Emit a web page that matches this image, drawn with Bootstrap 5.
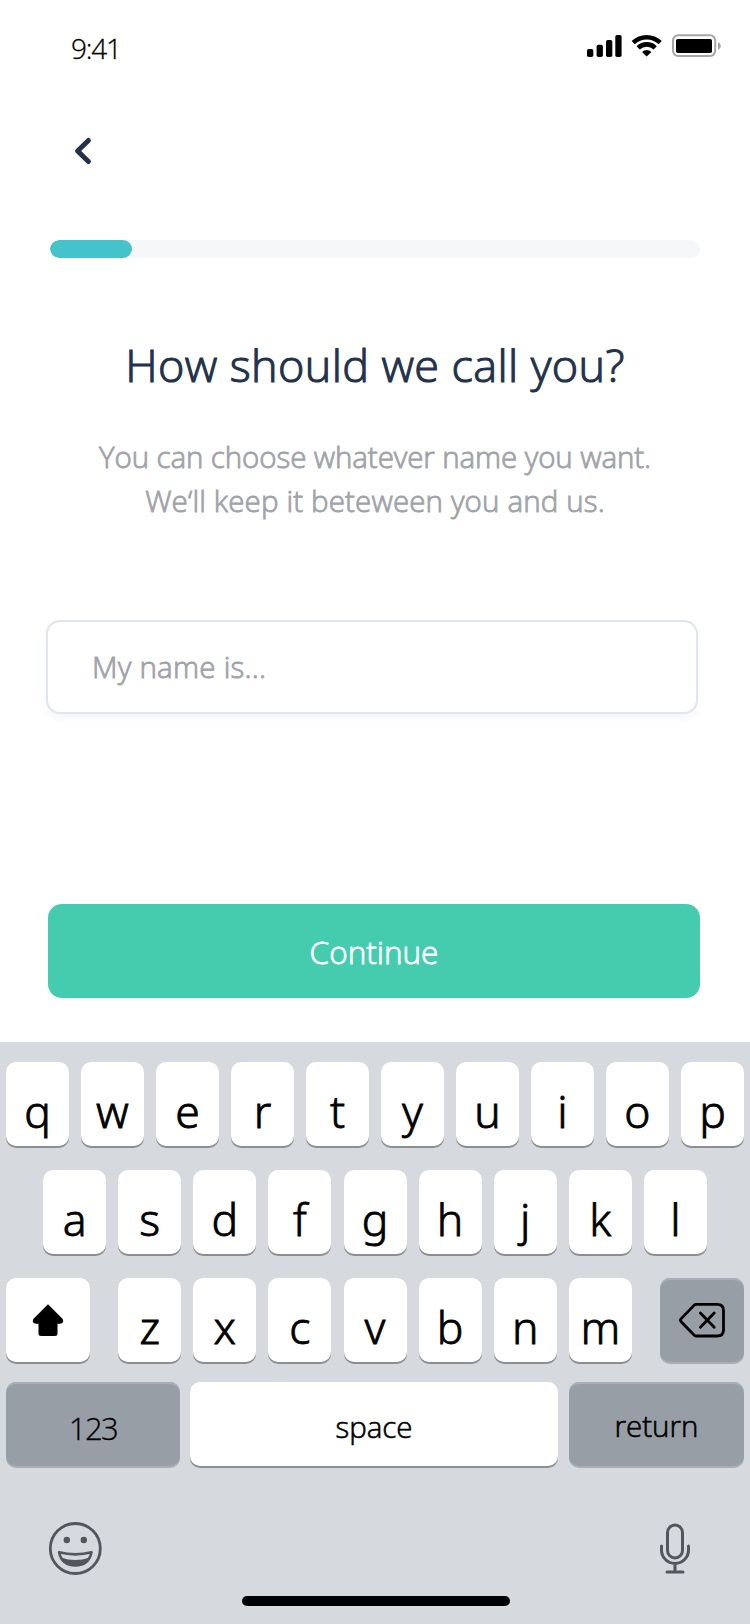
<!DOCTYPE html>
<html lang="en">
<head>
<meta charset="utf-8">
<meta name="viewport" content="width=device-width, initial-scale=1">
<title>Your name</title>
<link href="https://cdn.jsdelivr.net/npm/bootstrap@5.3.0/dist/css/bootstrap.min.css" rel="stylesheet">
<style>
  body { font-family: "Open Sans", "Noto Sans", sans-serif; font-weight: 300; color: #000; background: #fff; }
  .phone { width: 750px; height: 1624px; overflow: hidden; }
  svg { display: block; }

  .status { height: 92px; padding: 0 28px 0 71px; }
  .clock { font-size: 28px; line-height: 97px; letter-spacing: -1.2px; -webkit-text-stroke: .3px; }
  .status-icons { padding-top: 34px; }

  .back { margin: 44px 0 0 73px; width: 20px; height: 30px; }
  .progress { --bs-progress-height: 18px; --bs-progress-bg: #f5f7f9; --bs-progress-border-radius: 9px; --bs-progress-bar-bg: #44c3cb; margin: 74px 50px 0; }
  .progress-bar { border-radius: 9px; }

  .headline { color: #23324b; font-size: 45px; font-weight: 300; line-height: 60px; letter-spacing: .38px; margin: 77px 0 0; -webkit-text-stroke: 1.1px; }
  .intro { color: #a0a3aa; font-size: 29.5px; line-height: 44px; margin: 40px 0 0; -webkit-text-stroke: .85px; }
  .intro span { display: block; }
  .intro .first { letter-spacing: -.1px; }
  .intro .second { letter-spacing: .14px; }

  .name-input { width: 652px; height: 94px; margin: 97px 0 0 46px; padding: 0 44px 1px; border: 2px solid #e1e6ed; border-radius: 14px; font-size: 29.5px; font-weight: 300; letter-spacing: .25px; box-shadow: 0 5px 8px rgba(0,0,0,.035); -webkit-text-stroke: .85px; }
  .name-input::placeholder { color: #a0a3aa; }

  .btn-continue { --bs-btn-color: #fff; --bs-btn-bg: #45ccaf; --bs-btn-border-width: 0; --bs-btn-border-radius: 14px; --bs-btn-padding-y: 0; --bs-btn-font-weight: 300; width: 652px; height: 94px; margin: 190px 0 0 48px; font-size: 31.5px; line-height: 96px; -webkit-text-stroke: .8px; }

  .keyboard { height: 582px; margin-top: 44px; background: #d6d9de; padding: 20px 6px 0; }
  .key-row { height: 84px; margin-bottom: 24px; gap: 12.1px; }
  .key-row-top { gap: 12px; }
  .key { flex: 0 0 63px; height: 84px; background: #fff; border-radius: 10px; box-shadow: 0 2px 0 #8d8e92; text-align: center; font-family: "Noto Sans", "Open Sans", sans-serif; font-size: 44.5px; line-height: 97.5px; -webkit-text-stroke: .8px; }
  .key-wide { flex-basis: 84px; }
  .key-dark { background: #979ea6; box-shadow: inset 0 2px 0 #a8b0ba, 0 2px 0 #acaeb3; }
  .key-label { font-family: "Open Sans", sans-serif; font-size: 29.5px; -webkit-text-stroke: .6px; }
  .tools { padding: 41px 53px 0 42px; height: 130px; }
  .home-bar { width: 268px; height: 10px; border-radius: 5px; background: #000; }
</style>
</head>
<body>
<div class="phone d-flex flex-column">

  <header class="status d-flex justify-content-between flex-shrink-0">
    <div class="clock">9:41</div>
    <svg class="status-icons" width="136" height="60" viewBox="586 0 136 26" preserveAspectRatio="xMinYMin">
      <g transform="translate(0,-34)">
        <rect x="587" y="49" width="6.3" height="8" rx="1.8"/>
        <rect x="596.6" y="44.7" width="6.3" height="12.3" rx="1.8"/>
        <rect x="606" y="40" width="6.3" height="17" rx="1.8"/>
        <rect x="615.3" y="35" width="6.3" height="22" rx="1.8"/>
        <g fill="none" stroke="#000" stroke-width="4.6">
          <path d="M633.2 42.6a19.6 19.6 0 0 1 27 0"/>
          <path d="M638.2 47.8a12.3 12.3 0 0 1 17 0"/>
        </g>
        <path d="M646.7 56.5l-4.7-4.6a7 7 0 0 1 9.4 0z"/>
        <rect x="673" y="35.3" width="42.2" height="20.7" rx="5.2" fill="none" stroke="#a6a6a6" stroke-width="2"/>
        <rect x="676" y="39" width="36" height="14" rx="1.8"/>
        <path d="M718 42q2.8 1.2 2.8 4t-2.8 4z" fill="#a6a6a6"/>
      </g>
    </svg>
  </header>

  <a class="back flex-shrink-0" href="#" aria-label="Back">
    <svg width="20" height="30" viewBox="73 136 20 30" fill="none" stroke="#23324b" stroke-width="5" stroke-linecap="round" stroke-linejoin="round"><path d="M88.4 140.5 77.6 151l10.8 10.5"/></svg>
  </a>

  <div class="progress flex-shrink-0" role="progressbar" aria-valuenow="12.6" aria-valuemin="0" aria-valuemax="100">
    <div class="progress-bar" style="width: 12.6%"></div>
  </div>

  <main class="flex-shrink-0">
    <h1 class="headline text-center">How should we call you?</h1>
    <p class="intro text-center"><span class="first">You can choose whatever name you want.</span><span class="second">We‘ll keep it beteween you and us.</span></p>
    <input class="form-control name-input" type="text" placeholder="My name is...">
    <button class="btn btn-continue d-block" type="button">Continue</button>
  </main>

  <section class="keyboard flex-shrink-0">
    <div class="key-row key-row-top d-flex">
      <div class="key">q</div><div class="key">w</div><div class="key">e</div><div class="key">r</div><div class="key">t</div><div class="key">y</div><div class="key">u</div><div class="key">i</div><div class="key">o</div><div class="key">p</div>
    </div>
    <div class="key-row d-flex justify-content-center">
      <div class="key">a</div><div class="key">s</div><div class="key">d</div><div class="key">f</div><div class="key">g</div><div class="key">h</div><div class="key">j</div><div class="key">k</div><div class="key">l</div>
    </div>
    <div class="key-row d-flex justify-content-between" style="margin-bottom: 20px">
      <div class="key key-wide">
        <svg width="84" height="84"><path d="M42 26.7 56 40.8Q57.6 43.5 56 44.8 55.4 45.2 51 45.3V56q0 1.5-1.5 1.5h-15Q33 57.5 33 56V45.3Q28.6 45.2 28 44.8 26.4 43.5 28 40.8Z" stroke="#000" stroke-width="1" stroke-linejoin="round"/></svg>
      </div>
      <div class="d-flex key-row">
        <div class="key">z</div><div class="key">x</div><div class="key">c</div><div class="key">v</div><div class="key">b</div><div class="key">n</div><div class="key">m</div>
      </div>
      <div class="key key-wide key-dark">
        <svg width="84" height="84" fill="none" stroke="#000" stroke-width="2.8" stroke-linecap="round" stroke-linejoin="round"><path d="M36 26.4H57q6.5 0 6.5 6V52q0 6-6.5 6H36Q35 58 34 57L21.2 43.8Q19.8 42.2 21.2 40.6L34 27.4Q35 26.4 36 26.4ZM40.4 35 54.2 49.2M54.2 35 40.4 49.2"/></svg>
      </div>
    </div>
    <div class="key-row d-flex" style="gap: 0">
      <div class="key key-dark key-label" style="flex-basis: 174px; margin-right: 10px; line-height: 92px; font-size: 31px; letter-spacing: -1.5px; -webkit-text-stroke: .3px">123</div>
      <div class="key key-label" style="flex-basis: 368px; margin-right: 11px; line-height: 90px">space</div>
      <div class="key key-dark key-label" style="flex-basis: 175px; line-height: 88px">return</div>
    </div>
    <div class="tools d-flex justify-content-between" style="margin-top: -10px">
      <svg width="54" height="54" viewBox="48.2 1521 54 54" fill="none" stroke="#53565c">
        <circle cx="75.5" cy="1548.5" r="25" stroke-width="2.8"/>
        <circle cx="67" cy="1540" r="3.2" fill="#53565c" stroke="none"/>
        <circle cx="84" cy="1540" r="3.2" fill="#53565c" stroke="none"/>
        <path d="M59.3 1552.3Q75.5 1556.5 91.7 1552.3 89 1565.5 75.5 1565.5T59.3 1552.3Z" stroke-width="2.6" stroke-linejoin="round"/>
        <path d="M61 1557.5Q75.5 1562.5 90 1557.5 86 1566 75.5 1566T61 1557.5Z" fill="#53565c" stroke="none"/>
      </svg>
      <svg width="32" height="54" viewBox="659 1521.5 32 54" fill="none" stroke="#53565c" stroke-width="3" stroke-linecap="round">
        <rect x="667.5" y="1525.5" width="15" height="33" rx="7.5"/>
        <path d="M661.5 1546.5V1550.5a13.5 13.5 0 0 0 27 0V1546.5M675 1564.5V1572M667 1572.5H683"/>
      </svg>
    </div>
    <div class="home-bar" style="margin: -14px 0 0 236px"></div>
  </section>
</div>
<script src="https://cdn.jsdelivr.net/npm/bootstrap@5.3.0/dist/js/bootstrap.bundle.min.js"></script>
</body>
</html>
